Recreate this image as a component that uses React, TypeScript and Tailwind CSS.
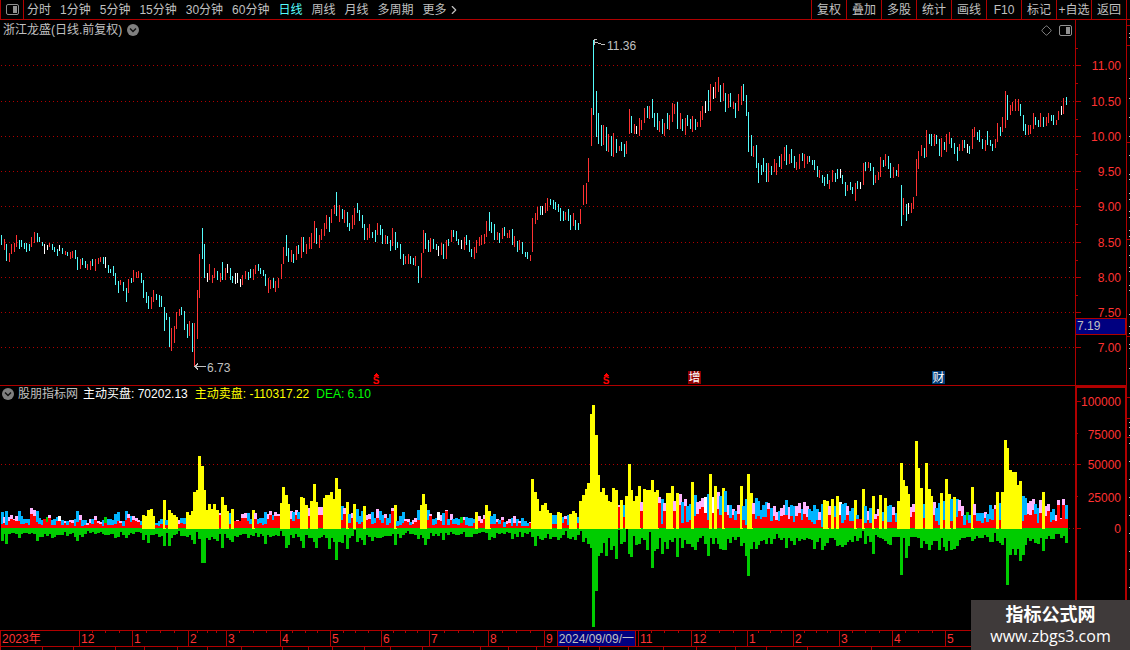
import React from 'react';
import { ChevronRight, Diamond } from 'lucide-react';

const RED = '#b00000';
const FONT = '"Liberation Sans", "Noto Sans CJK SC", sans-serif';

const PERIODS = ['分时', '1分钟', '5分钟', '15分钟', '30分钟', '60分钟', '日线', '周线', '月线', '多周期'];
const TOOLS = ['复权', '叠加', '多股', '统计', '画线', 'F10', '标记', '+自选', '返回'];

// Daily ranges: direction (r up, c down, w flat) + x, high, low
const CANDLES = `c1 235 245,r4 239 250,c6 244 261,r9 253 262,r11 244 254,r14 243 252,r16 235 247,c19 240 249,c21 240 247,c24 243 249,c26 243 252,c29 244 251,r31 237 247,r34 232 243,c37 233 242,c39 237 242,c42 242 246,w44 244 254,w47 245 250,r49 243 247,c52 244 250,c54 247 252,c57 249 256,w59 245 251,c62 248 254,r65 251 255,c67 252 256,r70 252 259,r72 251 258,c75 250 259,c77 257 270,r80 259 269,c82 258 265,c85 261 268,r87 264 270,r90 261 270,c92 259 266,r95 259 271,r98 258 264,r100 257 262,c103 257 264,w105 257 268,c108 265 273,c110 269 273,c113 266 276,c115 273 285,c118 281 293,r120 280 285,c123 282 291,c126 288 302,r128 279 293,c131 278 283,r133 270 282,r136 272 278,r138 271 278,c141 273 283,c143 280 298,c146 292 303,c148 296 309,r151 297 309,r153 290 302,c156 294 300,c159 295 307,c161 296 307,c164 307 331,c166 313 320,c169 317 347,r171 328 351,r174 326 343,r176 312 329,r179 309 316,c181 307 315,c184 311 330,c187 324 338,r189 321 336,c192 323 352,r194 323 367,r197 290 339,r199 254 298,c202 228 259,c204 244 278,w207 273 282,r209 264 280,r212 275 283,r214 268 278,c217 271 280,r220 273 282,c222 262 280,r225 268 280,w227 264 273,c230 268 280,c232 276 283,w235 273 284,w237 273 283,w240 279 287,r242 275 285,r245 271 279,c248 272 280,c250 269 278,r253 269 280,r255 265 274,c258 264 271,c260 268 274,c263 270 276,c265 274 286,r268 278 293,r270 280 289,c273 278 288,r275 281 292,r278 278 288,r281 264 279,r283 247 264,c286 235 256,c288 248 262,
r291 250 262,c293 254 263,r296 246 260,c298 245 254,r301 237 258,c303 237 252,r306 244 254,r309 237 249,r311 233 249,r314 221 243,c316 228 244,r319 235 248,r321 229 240,r324 223 236,r326 215 229,c329 217 232,r331 209 223,r334 205 214,c336 192 216,r339 205 222,c342 209 219,r344 210 223,c347 212 227,c349 223 231,r352 215 229,r354 208 225,c357 203 213,c359 210 221,c362 215 228,c364 224 240,r367 228 240,r369 224 238,c372 232 238,c375 230 242,r377 223 235,c380 225 235,c382 229 244,r385 235 244,c387 236 244,c390 240 251,r392 228 246,c395 232 250,c397 242 248,c400 244 259,c403 254 265,r405 256 264,r408 254 264,c410 256 264,c413 258 265,r415 256 266,c418 266 283,r421 253 278,r423 230 253,c425 233 249,c428 240 252,r430 238 252,c433 239 249,c436 244 250,w438 246 256,r441 243 255,c443 244 259,r446 240 259,c448 239 246,r451 230 242,c453 230 237,c456 231 241,c458 239 245,w461 240 249,r464 237 250,c466 235 245,c469 240 252,c471 249 257,r474 247 259,r476 240 253,r479 237 246,r481 235 245,r484 234 244,r486 221 237,c489 212 231,c491 222 233,c494 224 240,r497 232 240,c499 233 243,r502 228 239,c504 227 236,r507 233 238,r509 230 238,c512 229 245,r514 236 247,c517 241 252,r519 240 250,c522 242 254,c525 252 257,c527 252 259,r530 255 261,r532 218 252,r535 213 224,r537 207 220,c540 206 215,w542 206 215,r545 203 213,r547 198 211,c550 199 205,c553 200 209,c555 202 210,c558 204 212,
c560 208 221,c563 211 221,r565 212 220,c568 209 221,c570 215 230,r573 213 226,c575 220 230,c578 223 230,r580 209 224,r583 185 205,r586 183 204,r588 158 182,r591 108 146,c593 40 115,c596 91 137,c598 113 144,c601 125 146,r603 125 145,c606 127 151,r608 134 152,c611 136 156,r613 133 157,c616 139 153,r619 146 151,c621 142 151,c624 144 157,r626 141 154,r629 109 134,c631 116 133,r634 124 134,w636 126 134,r639 118 136,r641 120 130,r644 108 123,c647 106 118,r649 106 119,c652 99 118,c654 113 127,c657 113 130,r659 121 132,c662 119 134,r664 123 136,c667 113 129,r669 115 130,r672 103 122,r674 104 114,c677 102 129,r680 113 129,c682 119 131,r685 118 135,c687 115 126,c690 119 129,r692 116 132,c695 119 130,r697 122 127,r700 111 127,r702 106 120,w705 101 113,c708 90 111,r710 84 111,w713 87 99,r715 82 98,r718 77 92,c720 85 102,r723 83 101,c725 93 112,r728 94 108,c730 93 107,r733 102 109,c735 103 118,r738 94 111,r741 86 105,c743 84 101,c746 95 116,c748 112 152,c751 135 156,r753 146 157,c756 145 168,c758 163 183,c761 165 175,c763 158 172,c766 163 182,r768 163 182,c771 166 175,r774 159 172,r776 163 175,c779 156 167,r781 154 169,r784 147 161,c786 145 165,r789 154 164,c791 149 163,c794 156 168,r796 162 170,r799 154 169,c802 153 161,
r804 154 168,r807 156 164,c809 156 162,c812 160 165,c814 160 170,c817 166 177,r819 170 178,c822 175 183,c824 177 186,c827 174 184,r829 180 189,r832 170 182,c835 173 182,c837 169 179,w840 169 178,c842 175 184,c845 182 196,r847 185 191,c850 182 190,c852 187 194,r855 183 201,c857 181 189,w860 182 189,r863 163 185,c865 162 171,r868 162 168,c870 163 171,c873 167 185,r875 175 183,r878 172 180,r880 157 177,c883 160 167,r885 154 166,c888 156 169,c890 163 178,r893 167 178,c896 170 176,r898 164 177,c901 185 226,r903 198 215,c906 204 221,w908 203 214,r911 203 213,r913 197 209,r916 159 196,r918 151 169,r921 145 156,c924 148 158,r926 130 157,c929 134 144,c931 134 146,r934 134 146,c936 135 144,c939 139 156,r941 138 157,c944 142 150,r946 134 152,r949 132 144,c951 138 148,c954 143 154,c957 147 161,r959 144 151,r962 140 151,c964 140 148,w967 144 153,c969 146 154,r972 129 149,r974 127 137,c977 132 140,c979 130 142,c982 139 149,r985 140 151,c987 131 145,c990 140 146,c992 144 151,r995 139 148,r997 123 142,c1000 127 136,r1002 117 132,r1005 91 128,c1007 95 120,r1010 105 115,r1012 102 111,r1015 99 111,r1018 99 111,c1020 104 116,c1023 115 131,c1025 124 135,r1028 125 135,r1030 125 134,r1033 113 129,c1035 117 125,c1038 120 127,r1040 113 127,c1043 117 127,r1046 117 126,r1048 113 123,c1051 115 121,c1053 115 125,r1056 120 125,r1058 111 120,w1061 106 115,r1063 98 114,c1066 97 105`;

// Order flow: kind + x, total height, red part, sell depth
const FLOWS = `b1 17 5 12,p4 12 6 5,b6 18 4 15,p9 12 8 5,p11 14 10 4,p14 10 9 4,p16 13 8 5,b19 18 8 9,b21 13 5 5,b24 10 5 4,b26 10 6 4,b29 10 4 5,p31 21 15 4,p34 19 13 5,b37 18 7 12,b39 11 5 8,b42 9 4 8,p44 10 10 5,g47 12 7 7,p49 14 11 5,b52 9 4 9,b54 10 4 8,b57 12 8 6,w59 13 8 6,b62 9 4 6,p65 8 6 3,b67 8 4 7,p70 9 7 5,p72 9 6 4,b75 10 3 8,b77 18 7 12,p80 14 9 6,b82 9 3 8,b85 9 4 5,p87 6 4 2,p90 10 6 4,b92 10 5 3,p95 13 9 5,p98 8 6 4,p100 7 5 3,b103 9 3 5,g105 12 6 6,b108 10 4 6,b110 10 4 5,b113 9 4 5,b115 15 5 9,b118 17 8 8,p120 8 6 3,b123 8 3 6,b126 18 9 9,p128 15 11 6,b131 13 7 4,p133 13 9 5,p136 11 8 3,p138 9 7 3,b141 8 4 4,y143 14 0 11,y146 13 0 6,y148 19 0 14,y151 20 0 6,y153 13 0 6,b156 6 4 5,b159 8 3 8,b161 10 5 7,y164 29 0 17,b166 9 4 4,y169 19 0 17,y171 16 0 9,y174 14 0 6,y176 12 0 5,p179 9 5 2,b181 11 6 7,b184 11 5 7,y187 17 0 8,y189 14 0 6,y192 18 0 11,y194 37 0 15,y197 39 0 3,y199 73 0 10,y202 63 0 34,y204 39 0 34,y207 19 0 9,y209 25 0 11,y212 20 0 8,y214 25 0 10,y217 19 0 12,p220 16 14 5,y222 32 0 19,y225 24 0 5,y227 18 0 9,b230 16 5 11,y232 20 0 13,p235 8 8 7,p237 9 8 8,p240 8 8 6,p242 15 11 5,p245 16 11 5,b248 16 8 9,b250 10 5 6,y253 19 0 7,p255 16 10 4,b258 10 5 8,b260 11 6 5,b263 11 4 7,b265 17 5 15,p268 15 10 6,p270 18 14 8,b273 14 9 7,p275 17 13 6,p278 15 13 7,y281 26 0 2,y283 42 0 7,y286 34 0 19,y288 25 0 16,
p291 18 10 6,b293 17 8 9,p296 19 14 5,b298 17 10 8,y301 32 0 12,y303 31 0 19,y306 24 0 6,p309 21 13 9,y311 28 0 9,y314 45 0 13,y316 27 0 19,p319 22 14 9,p321 22 14 8,y324 31 0 6,y326 34 0 9,y329 34 0 20,y331 37 0 9,y334 30 0 13,y336 51 0 31,y339 40 0 13,b342 23 9 14,p344 21 15 6,y347 27 0 20,b349 15 6 9,p352 16 11 7,y354 25 0 1,b357 20 7 13,b359 13 5 9,b362 18 7 11,y364 23 0 16,p367 14 9 6,p369 15 10 8,b372 17 5 12,b375 11 6 8,p377 20 11 9,b380 18 9 9,b382 14 6 8,p385 15 11 7,b387 11 4 7,b390 15 6 7,p392 21 18 5,y395 24 0 16,b397 8 3 5,b400 13 4 9,b403 17 6 6,p405 10 8 4,p408 10 7 2,b410 7 4 5,p413 9 5 5,p415 11 7 6,b418 19 9 10,y421 24 0 6,y423 35 0 9,y425 25 0 16,b428 19 9 10,p430 15 13 4,b433 10 4 7,b436 11 5 5,w438 17 9 7,p441 14 8 4,b443 16 4 11,p446 19 18 4,b448 10 4 6,p451 15 9 3,b453 10 5 5,b456 11 5 6,b458 10 4 6,g461 12 6 5,p464 12 9 3,b466 12 4 8,b469 11 3 8,b471 11 3 8,b474 10 6 5,y476 17 0 5,p479 13 8 4,p481 10 6 3,p484 14 10 3,y486 24 0 4,y489 18 0 11,b491 13 5 8,b494 15 5 9,p497 10 7 4,b499 9 5 5,p502 12 9 4,b504 7 2 5,p507 8 5 3,p509 10 6 4,b512 11 3 10,p514 13 6 5,b517 10 3 8,p519 8 6 3,b522 11 3 8,b525 8 3 4,b527 6 3 5,p530 7 6 3,y532 50 0 8,y535 37 0 17,y537 30 0 7,y540 18 0 10,y542 24 0 11,y545 26 0 9,y547 19 0 5,y550 16 0 10,b553 14 5 8,b555 14 5 8,y558 17 0 11,
y560 16 0 9,b563 12 6 6,p565 13 10 2,b568 14 4 9,y570 15 0 10,y573 18 0 8,y575 16 0 11,b578 12 6 6,y580 28 0 2,y583 34 0 13,y586 40 0 9,y588 46 0 15,y591 115 0 19,y593 124 0 98,y596 94 0 62,y598 54 0 27,y601 37 0 24,y603 41 0 14,y606 34 0 27,y608 28 0 9,y611 27 0 21,y613 41 0 17,y616 39 0 30,p619 24 22 1,y621 29 0 15,b624 24 12 13,y626 33 0 0,y629 65 0 25,y631 39 0 28,y634 28 0 7,y636 33 0 16,y639 43 0 15,p641 27 18 9,y644 40 0 11,y647 39 0 21,y649 39 0 3,y652 49 0 39,y654 37 0 22,y657 39 0 20,p659 32 26 9,b662 30 5 25,p664 26 18 13,y667 36 0 20,y669 36 0 11,y672 43 0 13,p674 28 18 9,y677 36 0 28,p680 35 24 9,b682 27 6 19,p685 30 23 11,b687 23 7 15,b690 25 9 15,y692 47 0 18,b695 34 13 21,p697 27 15 13,p700 28 20 9,p702 31 22 7,w705 32 16 15,b708 35 9 27,y710 55 0 9,w713 32 16 15,y715 43 0 9,p718 37 20 15,b720 33 14 20,y723 41 0 21,b725 38 17 21,p728 24 14 10,b730 24 11 14,p733 20 14 8,b735 18 9 11,p738 24 15 8,y741 43 0 17,b743 23 9 14,b746 30 4 27,y748 55 0 47,y751 36 0 20,p753 26 15 13,b756 31 10 20,b758 28 13 16,b761 19 10 12,b763 24 12 11,b766 27 12 15,p768 26 20 9,b771 21 8 15,p774 23 13 10,p776 17 9 5,b779 18 8 9,p781 21 13 11,p784 24 14 9,b786 29 14 19,p789 22 10 9,b791 24 13 12,b794 23 7 16,p796 23 13 9,p799 26 16 12,b802 20 9 10,p804 27 15 11,p807 23 12 9,b809 20 9 10,b812 18 7 11,b814 24 5 20,b817 20 9 13,p819 17 9 9,b822 25 2 21,y824 29 0 17,y827 28 0 14,p829 23 14 9,y832 30 0 9,b835 23 12 11,y837 33 0 17,w840 27 14 16,
b842 25 6 18,b845 26 9 16,p847 23 14 13,b850 18 8 11,b852 21 8 13,y855 29 0 7,b857 14 10 12,p860 10 10 9,y863 40 0 2,b865 23 6 15,p868 18 9 7,b870 21 6 13,y873 33 0 25,p875 15 10 6,p878 20 13 8,y880 34 0 9,b883 17 8 10,y885 31 0 12,b888 23 7 15,b890 24 7 16,p893 22 14 8,b896 16 7 8,y898 28 0 8,y901 66 0 46,y903 49 0 9,y906 43 0 29,y908 35 0 17,p911 22 12 8,p913 25 17 8,y916 88 0 8,y918 61 0 9,y921 41 0 19,b924 25 11 12,y926 66 0 15,y929 40 0 21,y931 33 0 16,p934 27 14 12,b936 21 8 12,b939 26 4 21,y941 36 0 9,b944 28 9 18,y946 50 0 22,y949 35 0 12,b951 30 8 21,y954 32 0 20,b957 30 12 17,p959 29 18 11,p962 23 13 9,b964 14 4 9,g967 17 9 8,b969 14 6 8,y972 42 0 12,p974 25 14 10,b977 16 8 7,b979 16 8 9,b982 16 6 9,p985 17 11 6,b987 15 7 8,b990 24 10 13,b992 20 9 13,p995 24 20 4,y997 37 0 12,b1000 26 9 14,y1002 37 0 16,y1005 89 0 9,y1007 81 0 56,y1010 59 0 26,y1012 57 0 20,y1015 57 0 26,y1018 44 0 20,y1020 48 0 32,b1023 33 8 26,b1025 31 14 16,p1028 26 15 9,p1030 28 14 12,p1033 30 19 10,b1035 25 15 14,b1038 21 6 15,p1040 29 16 9,y1043 37 0 22,p1046 23 13 10,p1048 25 18 7,b1051 17 7 10,b1053 20 9 10,p1056 14 8 5,p1058 29 24 5,p1061 11 10 9,p1063 30 24 7,b1066 24 10 14`;

const parse = (src: string) =>
  src.split(',').map((item) => {
    const [head, ...rest] = item.trim().split(' ');
    return { kind: head[0], x: Number(head.slice(1)), v: rest.map(Number) };
  });

const candles = parse(CANDLES);
const flows = parse(FLOWS);

const CANDLE_COLORS: Record<string, string> = { r: '#ff3232', c: '#54fcfc', w: '#ffffff' };
const FLOW_COLORS: Record<string, string> = { b: '#00b4ff', p: '#ffb4ff', w: '#ffffff', g: '#00cc00', y: '#ffff00' };

const PRICE_LEVELS: [number, string][] = [
  [65, '11.00'], [101, '10.50'], [136, '10.00'], [171, '9.50'], [206, '9.00'],
  [242, '8.50'], [277, '8.00'], [312, '7.50'], [347, '7.00'],
];
const PRICE_MINOR = [48, 83, 119, 154, 189, 224, 260, 295];
const FLOW_LEVELS: [number, string][] = [[401, '100000'], [434, '75000'], [464, '50000'], [497, '25000'], [528, '0']];

const MONTHS: [string, number][] = [
  ['2023年', 79], ['12', 53], ['1', 56], ['2', 38], ['3', 54], ['4', 50], ['5', 51], ['6', 48], ['7', 59],
  ['8', 56], ['9', 94], ['11', 53], ['12', 56], ['1', 46], ['2', 46], ['3', 53], ['4', 53], ['5', 185],
];

const FOOTER_CELLS = [42, 31, 42, 29, 33, 30, 34, 41, 26, 24, 32, 26, 32, 58, 28, 28, 32, 31, 29, 35, 33, 39, 31, 41, 64, 259];

const EDGE_MARKS = [33, 37, 78, 98, 117, 136, 155, 174, 179, 193, 199, 211, 217, 230, 236, 245, 255, 267, 271, 285, 290, 314, 326, 333, 344, 348, 368, 422, 427, 435, 443, 461, 479, 497, 515, 533, 551, 569, 587];
const EDGE_LINES = [25, 45, 142, 239, 336, 397, 418, 437];

const share = (width: number, all: number[]) => `${(width / all.reduce((a, b) => a + b, 0)) * 100}%`;
const monthWidths = MONTHS.map(([, width]) => width);

const GridLine: React.FC<{ y: number; from?: number }> = ({ y, from = 1 }) => (
  <line x1={from} x2={1075} y1={y + 0.5} y2={y + 0.5} stroke={RED} strokeDasharray="1 3" />
);

const PanelIcon: React.FC = () => (
  <svg width="13" height="11" viewBox="0 0 13 11" className="shrink-0">
    <rect x="0.5" y="0.5" width="12" height="10" rx="1.5" fill="none" stroke="#909090" />
    <rect x="7" y="2" width="4" height="7" fill="#909090" />
  </svg>
);

const RoundToggle: React.FC<{ label: string }> = ({ label }) => (
  <button aria-label={label} className="shrink-0">
    <svg width="12" height="12" viewBox="0 0 12 12" className="block">
      <circle cx="6" cy="6" r="6" fill="#808080" />
      <path d="M3 4.5 L6 7.5 L9 4.5" fill="none" stroke="#111111" strokeWidth="1.5" />
    </svg>
  </button>
);

const TopBar: React.FC = () => (
  <header className="flex h-5 border-b border-[#b00000] text-[#c0c0c0]">
    <button aria-label="侧栏" className="flex w-6 shrink-0 items-center justify-center border-x border-[#b00000]">
      <PanelIcon />
    </button>
    <nav className="flex grow items-center gap-[9px] pl-[3px]">
      {PERIODS.map((name) => (
        <button key={name} className={name === '日线' ? 'text-[#54fcfc]' : ''}>{name}</button>
      ))}
      <button className="flex items-center">
        更多
        <ChevronRight size={14} strokeWidth={2} />
      </button>
    </nav>
    <div className="mr-[3px] flex border-r border-[#b00000]">
      {TOOLS.map((name) => (
        <button key={name} className="w-[35px] whitespace-nowrap border-l border-[#b00000]">{name}</button>
      ))}
    </div>
  </header>
);

const PricePanel: React.FC = () => (
  <section className="relative">
    <div className="absolute inset-x-0 top-0 flex h-5 items-center gap-[5px] pl-[3px] text-[#c0c0c0]">
      <h1>浙江龙盛(日线.前复权)</h1>
      <RoundToggle label="展开" />
      <div className="ml-auto mr-[54px] flex items-center gap-[7px]">
        <button aria-label="标记点"><Diamond size={11} strokeWidth={2} color="#909090" /></button>
        <button aria-label="窗口"><PanelIcon /></button>
      </div>
    </div>
    <svg viewBox="0 20 1126 365" className="block h-auto w-full" fontSize="12" shapeRendering="crispEdges">
      {PRICE_LEVELS.map(([y, label]) => (
        <g key={label}>
          <GridLine y={y} />
          <rect x="1076" y={y} width="5" height="1" fill={RED} />
          <text x="1121" y={y + 5} textAnchor="end" fill="#ff3232">{label}</text>
        </g>
      ))}
      {PRICE_MINOR.map((y) => <rect key={y} x="1076" y={y} width="2" height="1" fill={RED} />)}
      <rect x="1075" y="20" width="1" height="365" fill={RED} />

      {candles.map(({ kind, x, v }) => (
        <rect key={x} x={x} y={v[0]} width="1" height={v[1] - v[0]} fill={CANDLE_COLORS[kind]} />
      ))}

      {/* High and low labels */}
      <g fill="none" stroke="#c0c0c0">
        <path d="M605 44.5 H601 M601 43.5 H598 M598 42.5 H594 M597 39.5 H594 V44.5" />
        <path d="M206 366.5 H194 M198 363.5 L195 366.5 L198 369.5" />
      </g>
      <text x="607" y="50" fill="#c0c0c0">11.36</text>
      <text x="207" y="372" fill="#c0c0c0">6.73</text>

      {/* Event markers */}
      {[376, 606].map((x) => (
        <g key={x} fill="#ff0000">
          <path d={`M${x - 3} 376 L${x} 373 L${x + 3} 376 Z`} />
          <text x={x} y="384" textAnchor="middle" fontSize="10" fontWeight="bold">S</text>
        </g>
      ))}
      <rect x="688" y="371" width="13" height="13" fill="#900000" />
      <text x="694.5" y="382" textAnchor="middle" fill="#ffffff">增</text>
      <rect x="932" y="371" width="13" height="13" fill="#003c78" />
      <text x="938.5" y="382" textAnchor="middle" fill="#ffffff">财</text>

      <rect x="1075.5" y="318.5" width="50" height="16" fill="#000080" stroke={RED} />
      <text x="1077" y="330" fill="#c0c0c0">7.19</text>
    </svg>
  </section>
);

const FlowPanel: React.FC = () => (
  <section className="relative border-t border-[#b00000]">
    <div className="absolute left-0 top-0 flex h-4 items-center whitespace-nowrap pl-[2px]">
      <RoundToggle label="指标" />
      <h2 className="ml-1 text-[#c0c0c0]">股朋指标网</h2>
      <span className="ml-[5px] text-white">主动买盘: 70202.13</span>
      <span className="ml-[7px] text-[#ffff00]">主动卖盘: -110317.22</span>
      <span className="ml-[7px] text-[#00ff00]">DEA: 6.10</span>
    </div>
    <svg viewBox="0 386 1126 244" className="block h-auto w-full" fontSize="12" shapeRendering="crispEdges">
      <GridLine y={464} />
      <GridLine y={528} from={1069} />
      {flows.map(({ x, v }) => (
        <rect key={x} x={x - 1 || 1} y={528} width="3" height={v[2] + 1} fill="#00cc00" />
      ))}
      {flows.map(({ kind, x, v }) => (
        <g key={x}>
          <rect x={x - 1 || 1} y={529 - v[0]} width="3" height={kind === 'y' ? v[0] : v[0] - 1} fill={FLOW_COLORS[kind]} />
          {v[1] > 0 && <rect x={x - 1 || 1} y={529 - v[1]} width="3" height={v[1] - 1} fill="#ff0000" />}
        </g>
      ))}

      <path d="M1075 386 H1127 V630 H1125 V388 H1077 V630 H1075 Z" fill={RED} />
      {FLOW_LEVELS.map(([y, label], i) => (
        <g key={label}>
          <rect x="1077" y={i % 2 ? y - 1 : y} width={i % 2 ? 1 : 4} height="1" fill={RED} />
          <text x="1121" y={y + 5} textAnchor="end" fill="#ff3232">{label}</text>
        </g>
      ))}
    </svg>
  </section>
);

const TimeAxis: React.FC = () => (
  <div className="flex h-[17px] border-y border-[#b00000] text-[#ff3232]">
    {MONTHS.map(([label, width], i) => (
      <div key={i} className="relative flex shrink-0 items-center border-l border-[#b00000] pl-px" style={{ width: share(width, monthWidths) }}>
        {i > 0 && i < MONTHS.length - 1 && label !== '9' && (
          <div className="absolute inset-x-0 top-0 flex justify-evenly">
            <i className="h-[2px] w-px bg-[#b00000]" />
            <i className="h-[2px] w-px bg-[#b00000]" />
            <i className="h-[2px] w-px bg-[#b00000]" />
          </div>
        )}
        {label}
        {label === '9' && (
          <span className="ml-1 mr-[2px] flex h-full grow items-center justify-center whitespace-nowrap border-x border-[#b00000] bg-[#000080] text-[#c0c0c0]">
            2024/09/09/一
          </span>
        )}
      </div>
    ))}
  </div>
);

const App: React.FC = () => {
  return (
    <div className="relative min-h-screen overflow-hidden bg-black text-[12px] leading-4" style={{ fontFamily: FONT }}>
      <TopBar />
      <div className="flex">
        <main className="min-w-0 grow">
          <PricePanel />
          <FlowPanel />
        </main>
        {/* Edge of the neighbouring quote panel */}
        <svg viewBox="0 20 4 610" className="block w-1 shrink-0" shapeRendering="crispEdges">
          <rect x="0" y="20" width="1" height="610" fill={RED} />
          {EDGE_LINES.map((y) => <rect key={y} x="1" y={y} width="3" height="1" fill={RED} />)}
          {EDGE_MARKS.map((y) => <rect key={y} x="3" y={y} width="1" height="1" fill="#c0c0c0" />)}
        </svg>
      </div>
      <TimeAxis />
      <div className="flex h-[3px]">
        {FOOTER_CELLS.map((width, i) => (
          <div key={i} className="shrink-0 border-l border-[#b00000]" style={{ width: share(width, FOOTER_CELLS) }} />
        ))}
      </div>

      {/* Site badge */}
      <a href="#" className="absolute bottom-0 right-0 flex h-[50px] w-[159px] flex-col items-center justify-center bg-[#3f3a3a] text-white">
        <span className="text-[18px] font-bold leading-[22px]">指标公式网</span>
        <span className="font-['Open_Sans'] text-[16px] leading-5">www.zbgs3.com</span>
      </a>
    </div>
  );
};

export default App;
